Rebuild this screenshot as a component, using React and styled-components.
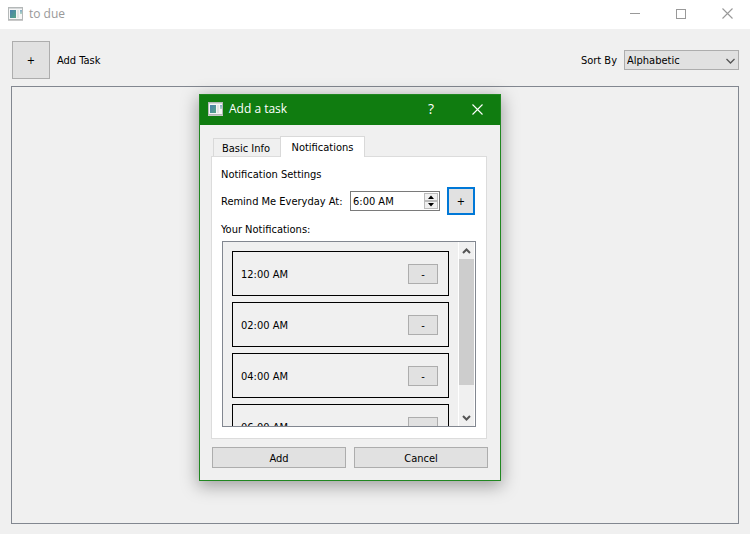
import React from "react";
import styled, { createGlobalStyle, css } from "styled-components";

const GlobalStyle = createGlobalStyle`
  *, *::before, *::after { box-sizing: border-box; }
  body { margin: 0; background: #f0f0f0; }
  body, button, input, select {
    font-family: "DejaVu Sans Condensed", "Noto Sans", sans-serif;
    font-size: 11px;
    line-height: 16px;
    color: #000;
  }
`;

const Window = styled.div`
  position: relative;
  display: flex;
  flex-direction: column;
  min-height: 100vh;
  background: #f0f0f0;
`;

const TitleBar = styled.header`
  display: flex;
  align-items: center;
  height: ${(p) => (p.$active ? 30 : 29)}px;
  padding: 0 0 2px 8px;
  background: ${(p) => (p.$active ? "#107c10" : "#fff")};
  color: ${(p) => (p.$active ? "#fff" : "#999")};
`;

const Title = styled.h1`
  flex: 1;
  margin: 0 0 0 6px;
  font-family: "Open Sans", "Noto Sans", sans-serif;
  font-size: 12px;
  font-weight: 400;
  line-height: 18px;
`;

const CaptionButton = styled.button`
  display: flex;
  align-items: center;
  justify-content: center;
  width: 46px;
  height: 100%;
  padding: 0;
  border: 0;
  background: none;
  color: inherit;
  font-family: "Open Sans", "Noto Sans", sans-serif;
  font-size: 14px;
`;

const Toolbar = styled.div`
  display: flex;
  align-items: center;
  justify-content: space-between;
  padding: 12px 11px 7px 12px;
`;

const Group = styled.div`
  display: flex;
  align-items: center;
  gap: 7px;
`;

const Label = styled.label`
  padding-top: 2px;
`;

const PushButton = styled.button`
  display: flex;
  align-items: center;
  justify-content: center;
  width: ${(p) => p.$width}px;
  height: ${(p) => p.$height}px;
  padding: 2px 0 0;
  border: 1px solid #adadad;
  background: #e1e1e1;
  ${(p) => p.$wide && css`flex: 1; width: auto;`}
  ${(p) => p.$focused && css`border: 2px solid #0078d7;`}
`;

const SelectBox = styled.div`
  position: relative;
  width: 115px;
  height: 20px;

  svg {
    position: absolute;
    right: 4px;
    top: 8px;
    pointer-events: none;
  }
`;

const Select = styled.select`
  appearance: none;
  width: 100%;
  height: 100%;
  padding: 2px 20px 0 2px;
  border: 1px solid #adadad;
  border-radius: 0;
  background: #e1e1e1;
`;

const TaskList = styled.main`
  flex: 1;
  margin: 0 11px 10px;
  border: 1px solid #828790;
`;

const Dialog = styled.section`
  position: absolute;
  left: 199px;
  top: 94px;
  width: 302px;
  border: 1px solid #218721;
  background: #f0f0f0;
  box-shadow: 0 4px 16px 1px rgba(0, 0, 0, 0.34);
`;

const DialogBody = styled.div`
  padding: 11px 13px 12px 11px;
`;

const Tabs = styled.div`
  display: flex;
  align-items: flex-end;
  padding-left: 2px;
`;

const Tab = styled.button`
  width: 68px;
  height: 18px;
  padding: 2px 2px 0 0;
  border: 1px solid #d9d9d9;
  border-bottom: 0;
  background: #f0f0f0;
  ${(p) =>
    p.$selected &&
    css`
      z-index: 1;
      width: 85px;
      height: 21px;
      margin: 0 0 -1px -1px;
      padding: 1px 0 0;
      background: #fff;
    `}
`;

const Panel = styled.div`
  display: flex;
  flex-direction: column;
  padding: 9px 10px 11px 9px;
  border: 1px solid #dcdcdc;
  background: #fff;
`;

const Text = styled.p`
  margin: 0;
  line-height: 18px;
`;

const ReminderRow = styled.div`
  display: flex;
  align-items: center;
  justify-content: space-between;
  margin: 3px 1px 6px 0;
`;

const TimeField = styled.div`
  display: flex;
  width: 90px;
  height: 20px;
  padding: 1px;
  border: 1px solid #7a7a7a;
  background: #fff;
`;

const TimeInput = styled.input`
  flex: 1;
  min-width: 0;
  padding: 2px 1px 0;
  border: 0;
  outline: 0;
  background: none;
`;

const Stepper = styled.div`
  display: flex;
  flex-direction: column;
  width: 14px;
`;

const StepButton = styled.button`
  display: flex;
  flex: 1;
  align-items: center;
  justify-content: center;
  padding: 0;
  border: 1px solid #bcbcbc;
  background: #f0f0f0;
`;

const ScrollFrame = styled.div`
  display: flex;
  height: 186px;
  margin: 2px 0 0 1px;
  overflow: hidden;
  border: 1px solid #828790;
  background: #f0f0f0;
`;

const Items = styled.ul`
  display: flex;
  flex: 1;
  flex-direction: column;
  gap: 6px;
  margin: 0;
  padding: 9px;
  list-style: none;
`;

const Item = styled.li`
  display: flex;
  flex: none;
  align-items: center;
  justify-content: space-between;
  height: 45px;
  padding: 0 10px 0 8px;
  border: 1px solid #000;
`;

const ItemTime = styled.time`
  padding-top: 2px;
`;

const ScrollBar = styled.div`
  display: flex;
  flex-direction: column;
  width: 17px;
  border: solid #fff;
  border-width: 0 1px;
`;

const ScrollArrow = styled.button`
  display: flex;
  align-items: center;
  justify-content: center;
  height: 17px;
  padding: 0;
  border: 0;
  background: none;
`;

const ScrollTrack = styled.div`
  flex: 1;
`;

const ScrollThumb = styled.div`
  height: 84%;
  background: #cdcdcd;
`;

const Actions = styled.footer`
  display: flex;
  gap: 8px;
  margin: 8px -1px 0 1px;
`;

const AppIcon = () => (
  <svg width="15" height="14" viewBox="0 0 15 14" shapeRendering="crispEdges" aria-hidden="true">
    <defs>
      <linearGradient id="pane" x1="0" y1="0" x2="1" y2="1">
        <stop offset="0" stopColor="#4a7fae" />
        <stop offset="1" stopColor="#55a586" />
      </linearGradient>
      <linearGradient id="strip" x1="0" y1="0" x2="0" y2="1">
        <stop offset="0" stopColor="#7fa9c6" />
        <stop offset="1" stopColor="#b5d8c6" />
      </linearGradient>
    </defs>
    <rect x="0.5" y="0.5" width="14" height="12" fill="#f6f6f6" stroke="#b4b8b8" />
    <rect x="1" y="1" width="13" height="1" fill="#d5d8d9" />
    <rect x="2" y="3" width="6" height="8" fill="url(#pane)" />
    <rect x="9" y="3" width="2" height="8" fill="#e2e4e4" />
    <rect x="12" y="3" width="2" height="4" fill="url(#strip)" />
    <rect x="0" y="13" width="15" height="1" fill="#c9c9c9" />
  </svg>
);

const CloseIcon = () => (
  <svg width="11" height="11" viewBox="0 0 11 11" fill="none" stroke="currentColor" aria-hidden="true">
    <path d="M0.5 0.5L10.5 10.5M10.5 0.5L0.5 10.5" strokeWidth="1.1" />
  </svg>
);

const Chevron = ({ up, bold }) => (
  <svg width="9" height="6" viewBox="0 0 9 6" fill="none" stroke="#555" strokeWidth={bold ? 2 : 1.3} aria-hidden="true">
    <path d={up ? "M1 5L4.5 1.5L8 5" : bold ? "M1 1L4.5 4.5L8 1" : "M0.5 1L4.5 5L8.5 1"} />
  </svg>
);

const Triangle = ({ up }) => (
  <svg width="6" height="4" viewBox="0 0 6 4" aria-hidden="true">
    <path d={up ? "M0 4L3 0.5L6 4Z" : "M0 0L3 3.5L6 0Z"} />
  </svg>
);

const times = ["12:00 AM", "02:00 AM", "04:00 AM", "06:00 AM"];

export default function App() {
  return (
    <Window>
      <GlobalStyle />
      <TitleBar>
        <AppIcon />
        <Title>to due</Title>
        <CaptionButton aria-label="Minimize">
          <svg width="10" height="11" viewBox="0 0 10 11" aria-hidden="true">
            <rect y="5" width="10" height="1" fill="currentColor" />
          </svg>
        </CaptionButton>
        <CaptionButton aria-label="Maximize">
          <svg width="10" height="10" viewBox="0 0 10 10" fill="none" stroke="currentColor" aria-hidden="true">
            <rect x="0.5" y="0.5" width="9" height="9" />
          </svg>
        </CaptionButton>
        <CaptionButton aria-label="Close">
          <CloseIcon />
        </CaptionButton>
      </TitleBar>

      <Toolbar>
        <Group>
          <PushButton id="add-task" $width={38} $height={38}>+</PushButton>
          <Label htmlFor="add-task">Add Task</Label>
        </Group>
        <Group>
          <Label htmlFor="sort">Sort By</Label>
          <SelectBox>
            <Select id="sort" defaultValue="Alphabetic">
              <option>Alphabetic</option>
            </Select>
            <Chevron />
          </SelectBox>
        </Group>
      </Toolbar>

      <TaskList />

      <Dialog role="dialog" aria-labelledby="dialog-title">
        <TitleBar $active>
          <AppIcon />
          <Title as="h2" id="dialog-title">Add a task</Title>
          <CaptionButton aria-label="Help">?</CaptionButton>
          <CaptionButton aria-label="Close">
            <CloseIcon />
          </CaptionButton>
        </TitleBar>
        <DialogBody>
          <Tabs role="tablist">
            <Tab role="tab" aria-selected="false">Basic Info</Tab>
            <Tab role="tab" aria-selected="true" $selected>Notifications</Tab>
          </Tabs>
          <Panel role="tabpanel">
            <Text>Notification Settings</Text>
            <ReminderRow>
              <Label htmlFor="time">Remind Me Everyday At:</Label>
              <Group>
                <TimeField>
                  <TimeInput id="time" defaultValue="6:00 AM" />
                  <Stepper>
                    <StepButton aria-label="Later"><Triangle up /></StepButton>
                    <StepButton aria-label="Earlier"><Triangle /></StepButton>
                  </Stepper>
                </TimeField>
                <PushButton $width={28} $height={28} $focused>+</PushButton>
              </Group>
            </ReminderRow>
            <Text>Your Notifications:</Text>
            <ScrollFrame>
              <Items>
                {times.map((time) => (
                  <Item key={time}>
                    <ItemTime>{time}</ItemTime>
                    <PushButton $width={30} $height={20} aria-label={`Remove ${time}`}>-</PushButton>
                  </Item>
                ))}
              </Items>
              <ScrollBar>
                <ScrollArrow aria-label="Scroll up"><Chevron up bold /></ScrollArrow>
                <ScrollTrack><ScrollThumb /></ScrollTrack>
                <ScrollArrow aria-label="Scroll down"><Chevron bold /></ScrollArrow>
              </ScrollBar>
            </ScrollFrame>
          </Panel>
          <Actions>
            <PushButton $wide $height={21}>Add</PushButton>
            <PushButton $wide $height={21}>Cancel</PushButton>
          </Actions>
        </DialogBody>
      </Dialog>
    </Window>
  );
}
